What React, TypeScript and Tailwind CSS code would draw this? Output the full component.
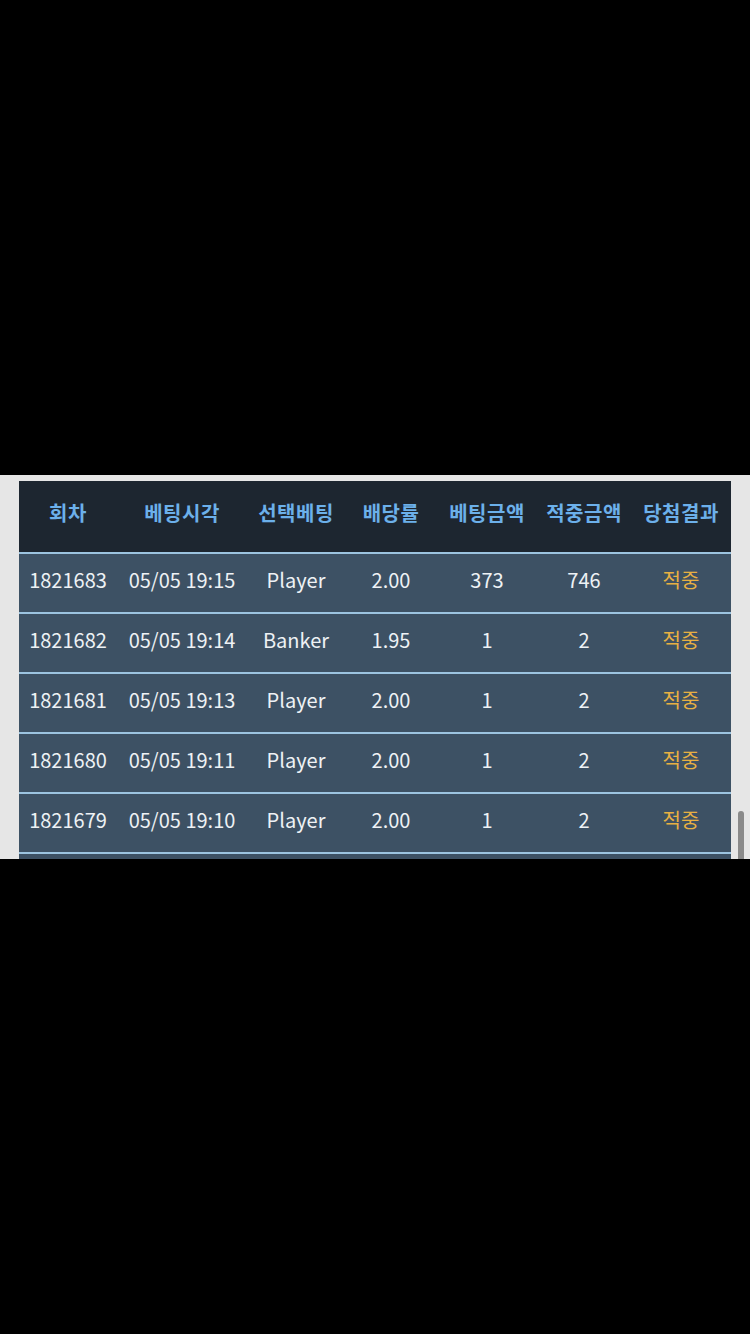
import React from 'react';

interface BetRow {
  round: string;
  time: string;
  pick: string;
  odds: string;
  amount: string;
  win: string;
  result: string;
}

const rows: BetRow[] = [
  { round: '1821683', time: '05/05 19:15', pick: 'Player', odds: '2.00', amount: '373', win: '746', result: '적중' },
  { round: '1821682', time: '05/05 19:14', pick: 'Banker', odds: '1.95', amount: '1', win: '2', result: '적중' },
  { round: '1821681', time: '05/05 19:13', pick: 'Player', odds: '2.00', amount: '1', win: '2', result: '적중' },
  { round: '1821680', time: '05/05 19:11', pick: 'Player', odds: '2.00', amount: '1', win: '2', result: '적중' },
  { round: '1821679', time: '05/05 19:10', pick: 'Player', odds: '2.00', amount: '1', win: '2', result: '적중' },
];

const headers = ['회차', '베팅시각', '선택베팅', '배당률', '베팅금액', '적중금액', '당첨결과'];

const cols = 'grid grid-cols-[98px_130px_98px_92px_100px_94px_100px]';

const App: React.FC = () => {
  return (
    <div
      className="w-[750px] h-[1334px] bg-black flex flex-col"
      style={{ fontFamily: '"Noto Sans CJK KR", "Noto Sans", sans-serif' }}
    >
      {/* Top black area */}
      <div className="h-[475px] shrink-0" />

      {/* Bet history viewport */}
      <div className="relative h-[384px] shrink-0 bg-[#e6e6e6] overflow-hidden">
        <div className="pt-[6px] pl-[19px]">
          <div className="w-[712px]">
            {/* Header */}
            <div className={`${cols} h-[73px] bg-[#1d2630] border-b-2 border-[#9cc4e0] items-center`}>
              {headers.map((h) => (
                <div key={h} className="text-center text-[20px] font-semibold tracking-[0.5px] text-[#6cb0ea] pb-[8px]">
                  {h}
                </div>
              ))}
            </div>

            {/* Rows */}
            {rows.map((r) => (
              <div
                key={r.round}
                className={`${cols} h-[60px] bg-[#3d5164] border-b-2 border-[#9cc4e0] items-center text-[20px] text-[#eef2f5]`}
              >
                <div className="text-center pb-[6px]">{r.round}</div>
                <div className="text-center pb-[6px]">{r.time}</div>
                <div className="text-center pb-[6px]">{r.pick}</div>
                <div className="text-center pb-[6px]">{r.odds}</div>
                <div className="text-center pb-[6px]">{r.amount}</div>
                <div className="text-center pb-[6px]">{r.win}</div>
                <div className="text-center pb-[6px] text-[#e8b042]">{r.result}</div>
              </div>
            ))}

            {/* Next row, scrolled out of view */}
            <div className="h-[60px] bg-[#3d5164] border-b-2 border-[#9cc4e0]" />
          </div>
        </div>

        {/* Scroll indicator */}
        <div className="absolute left-[738px] top-[336px] w-[6px] h-[60px] rounded-full bg-[#8a8a8a]" />
      </div>

      {/* Bottom black area */}
      <div className="flex-1" />
    </div>
  );
};

export default App;
